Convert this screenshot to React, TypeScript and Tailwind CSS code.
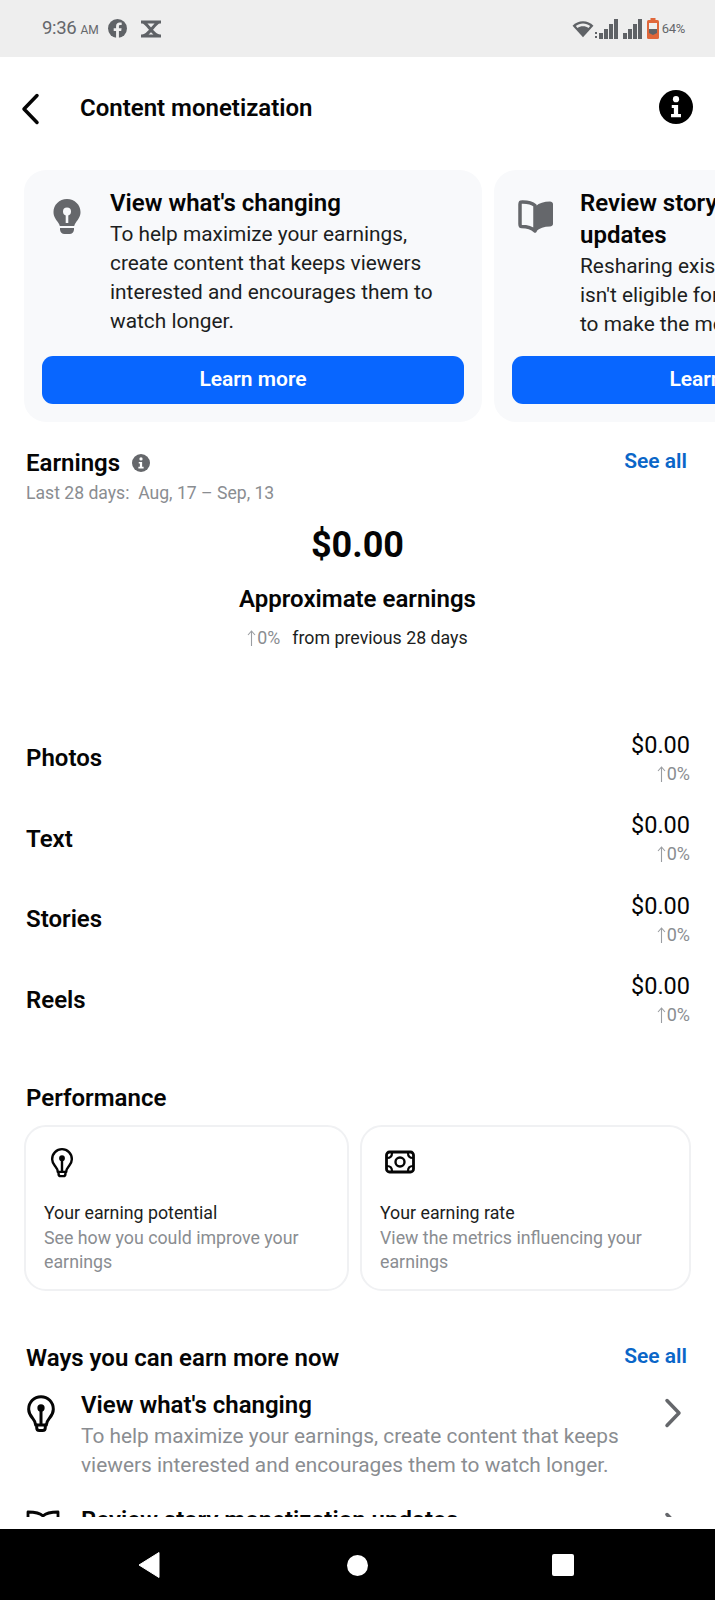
import React from 'react';

const font = { fontFamily: 'Roboto, sans-serif' };

function BulbFilled() {
  return (
    <svg width="30" height="38" viewBox="0 0 30 38" className="shrink-0">
      <path d="M15 1C7.2 1 1.5 7 1.5 14c0 4.600 2.400 7.600 4.600 10.400.9 1.200 1.400 2.200 1.700 3.600h14.400c.3-1.400.8-2.400 1.700-3.600 2.200-2.800 4.600-5.800 4.600-10.400C28.500 7 22.800 1 15 1z" fill="#65676b" />
      <circle cx="15" cy="13.500" r="4" fill="#f8f9fb" />
      <rect x="13.700" y="15" width="2.600" height="10" fill="#f8f9fb" />
      <path d="M8 30h14v1.500c0 2.500-2 4.500-4.500 4.500h-5C10 36 8 34 8 31.500z" fill="#65676b" />
    </svg>
  );
}

function BookFilled() {
  return (
    <svg width="36" height="36" viewBox="0 0 36 36" className="shrink-0 -ml-[4px]">
      <path d="M17 7.500C14 4.800 9.500 3.800 3.500 4 2.500 4 2 5 2 6.500V26c0 1.500.5 2.500 1.500 2.500 5.500 0 10 1 13.500 4.500z" fill="none" stroke="#65676b" strokeWidth="3.500" strokeLinejoin="round" />
      <path d="M18 8c3-3 8-4.500 14-4.500 1.500 0 3 1 3 2.500v20c0 1.500-1.500 2.500-3 2.500-6 0-10.500 1.500-14 5z" fill="#65676b" />
    </svg>
  );
}

function BulbOutline({ size = 28 }: { size?: number }) {
  return (
    <svg width={size} height={size * 1.3} viewBox="0 0 28 36.400" className="shrink-0" fill="none" stroke="#050505" strokeWidth="2.800" strokeLinecap="round" strokeLinejoin="round">
      <path d="M9 29c0-3-1.200-4.400-3-6.600C4 20 2.500 17.600 2.500 14.200 2.500 7.600 7.600 2.500 14 2.500s11.500 5.100 11.500 11.700c0 3.400-1.500 5.800-3.500 8.200-1.800 2.200-3 3.600-3 6.600z" />
      <path d="M10 29v2.500c0 1.500 1 2.500 2.500 2.500h3c1.500 0 2.500-1 2.500-2.500V29" />
      <path d="M14 14v14" />
      <circle cx="14" cy="13" r="2" fill="#050505" />
    </svg>
  );
}

function MoneyIcon() {
  return (
    <svg width="30" height="24" viewBox="0 0 30 24" fill="none" stroke="#050505" className="shrink-0 mt-[3px] -ml-[1px]">
      <rect x="1.500" y="2" width="27" height="20" rx="3" strokeWidth="2.800" />
      <circle cx="15" cy="12" r="4.500" strokeWidth="2.400" />
      <path d="M2 8c3 0 5-2 5-5M28 8c-3 0-5-2-5-5M2 16c3 0 5 2 5 5M28 16c-3 0-5 2-5 5" strokeWidth="2.200" />
    </svg>
  );
}

function InfoDot({ size, color }: { size: number; color: string }) {
  return (
    <svg width={size} height={size} viewBox="0 0 24 24" className="shrink-0">
      <circle cx="12" cy="12" r="12" fill={color} />
      <circle cx="12" cy="6.500" r="2.200" fill="#fff" />
      <path d="M9 10.500h4.500V17H15.500v2.200h-7V17h2v-4.300H9z" fill="#fff" />
    </svg>
  );
}

function UpArrow() {
  return (
    <svg width="9" height="16" viewBox="0 0 9 16" fill="none" stroke="#9a9da1" strokeWidth="1.100" className="shrink-0">
      <path d="M4.500 16V1M1 5l3.500-4L8 5" />
    </svg>
  );
}

function StatusBar() {
  const bars = [6, 10, 15, 20];
  return (
    <div className="h-[57px] shrink-0 bg-[#eeeeee] flex items-center justify-between pl-[42px] pr-[30px] text-[#65676b]">
      <div className="flex items-center">
        <span className="text-[18.500px] tracking-[-0.3px]">9:36</span>
        <span className="text-[12px] ml-[4px] mt-[3px]">AM</span>
        <svg width="19" height="19" viewBox="0 0 20 20" className="ml-[9px]">
          <circle cx="10" cy="10" r="10" fill="#5f6266" />
          <path d="M8.500 20v-7.500H6V9.700h2.500V7.600c0-2.500 1.500-3.800 3.700-3.800 1 0 1.900.1 2.200.1v2.500h-1.500c-1.200 0-1.400.6-1.400 1.400v1.900h2.800l-.4 2.800h-2.400V20z" fill="#eeeeee" />
        </svg>
        <svg width="22" height="18" viewBox="0 0 22 18" className="ml-[13px]" fill="none" stroke="#5f6266" strokeWidth="3" strokeLinejoin="round">
          <path d="M1 2h20M1 16h20M2 2c6 0 10 14 18 14M20 2C14 2 10 16 2 16" />
        </svg>
      </div>
      <div className="flex items-center">
        <svg width="22" height="18" viewBox="0 0 20 16">
          <path d="M10 15.500L.5 5C3 2.500 6.300 1 10 1s7 1.500 9.500 4z" fill="#5f6266" />
          <path d="M3.500 5.200C5.200 3.800 7.500 3 10 3s4.800.8 6.500 2.200L15 7c-1.300-1-3-1.500-5-1.500S6.300 6 5 7z" fill="#eeeeee" />
        </svg>
        <div className="flex items-end gap-[1px] ml-[1px] h-[20px]">
          <div className="flex flex-col gap-[2px] mr-[1px] mb-[1px]">
            <div className="w-[2px] h-[2px] bg-[#5f6266]" />
            <div className="w-[2px] h-[2px] bg-[#5f6266]" />
          </div>
          {bars.map((h) => (
            <div key={h} className="w-[4px] bg-[#5f6266]" style={{ height: h }} />
          ))}
          <div className="w-[3px]" />
          {bars.map((h) => (
            <div key={h} className="w-[4px] bg-[#5f6266]" style={{ height: h }} />
          ))}
        </div>
        <svg width="12" height="21" viewBox="0 0 12 21" className="ml-[5px]">
          <rect x="3.500" y="0" width="5" height="2" fill="#e0673a" />
          <rect x="0" y="2" width="12" height="19" rx="1.500" fill="#e0673a" />
          <rect x="2" y="5" width="8" height="6" fill="#eeeeee" />
          <path d="M2 11h8v4l-4 2-4-2z" fill="#5f6266" />
        </svg>
        <span className="text-[13px] ml-[3px] tracking-[-0.3px]">64%</span>
      </div>
    </div>
  );
}

function PromoCard({ icon, title, body }: { icon: React.ReactNode; title: React.ReactNode; body: React.ReactNode }) {
  return (
    <div className="w-[458px] shrink-0 h-[252px] bg-[#f8f9fb] rounded-[22px] px-[18px] pt-[17px] flex flex-col">
      <div className="flex h-[166px] overflow-hidden">
        <div className="w-[50px] shrink-0 pl-[10px] pt-[11px]">{icon}</div>
        <div className="pl-[18px] min-w-[346px]">
          <div className="text-[24px] leading-[32px] font-semibold text-[#050505] whitespace-nowrap">{title}</div>
          <div className="text-[20.850px] leading-[29px] mt-[1px] text-[#1c1e21] whitespace-pre-line">{body}</div>
        </div>
      </div>
      <div className="h-[48px] w-[422px] mt-[3px] shrink-0 bg-[#0866ff] rounded-[11px] text-white text-[21px] font-semibold flex items-center justify-center">
        Learn more
      </div>
    </div>
  );
}

function EarningRow({ label }: { label: string }) {
  return (
    <div className="flex items-center justify-between h-[80.500px] -mr-[1px]">
      <span className="text-[24px] font-semibold text-[#050505]">{label}</span>
      <div className="flex flex-col items-end">
        <span className="text-[23.500px] leading-[30px] text-[#050505]">$0.00</span>
        <span className="text-[18px] leading-[26px] mt-[1px] text-[#8a8d91] flex items-center gap-[1px]"><UpArrow />0%</span>
      </div>
    </div>
  );
}

function PerfCard({ icon, title, desc, className }: { icon: React.ReactNode; title: string; desc: string; className: string }) {
  return (
    <div className={`${className} h-[166px] rounded-[22px] border-2 border-[#f0f1f3] pl-[18px] pr-[12px] pt-[20px]`}>
      <div className="h-[49px] pl-[6px] flex items-start">{icon}</div>
      <div className="text-[17.800px] leading-[26px] mt-[4px] text-[#1c1e21]">{title}</div>
      <div className="text-[17.800px] leading-[24px] text-[#8a8d91]">{desc}</div>
    </div>
  );
}

export default function App() {
  return (
    <div className="w-[715px] h-[1600px] bg-white flex flex-col overflow-hidden" style={font}>
      <StatusBar />

      <div className="h-[100px] shrink-0 flex items-center pl-[21px] pr-[22px] pt-[1px]">
        <svg width="20" height="32" viewBox="0 0 20 32" fill="none" stroke="#050505" strokeWidth="3.500" strokeLinecap="round" strokeLinejoin="round" className="mt-[2px]">
          <path d="M16 2.500L3 16l13 13.500" />
        </svg>
        <span className="ml-[39px] text-[24px] font-semibold text-[#050505]">Content monetization</span>
        <div className="ml-auto -mt-[1px]"><InfoDot size={34} color="#000" /></div>
      </div>

      <div className="flex-1 mb-[12px] overflow-hidden">
        <div className="flex gap-[12px] pl-[24px] pt-[13px] w-[1200px]">
          <PromoCard
            icon={<BulbFilled />}
            title="View what's changing"
            body={'To help maximize your earnings,\ncreate content that keeps viewers\ninterested and encourages them to\nwatch longer.'}
          />
          <PromoCard
            icon={<BookFilled />}
            title={<>Review story monetization<br />updates</>}
            body={"Resharing existing content\nisn't eligible for monetization\nto make the most of it"}
          />
        </div>

        <div className="px-[26px] mt-[26px]">
          <div className="flex justify-between items-start">
            <div className="flex items-center gap-[12px]">
              <span className="text-[24px] leading-[30px] font-semibold text-[#050505]">Earnings</span>
              <InfoDot size={18} color="#65676b" />
            </div>
            <span className="text-[21px] leading-[26px] font-semibold text-[#0a66c8] mr-[2px]">See all</span>
          </div>
          <div className="text-[17.600px] leading-[26px] mt-[2px] text-[#8a8d91]">Last 28 days:&nbsp; Aug, 17 – Sep, 13</div>

          <div className="flex flex-col items-center mt-[13px]">
            <span className="text-[36px] leading-[52px] font-bold text-[#050505]">$0.00</span>
            <span className="text-[24px] leading-[34px] mt-[11px] font-semibold text-[#050505]">Approximate earnings</span>
            <div className="mt-[9px] text-[17.800px] leading-[26px] flex items-center gap-[12px]">
              <span className="text-[#8a8d91] flex items-center gap-[1px]"><UpArrow />0%</span>
              <span className="text-[#1c1e21]">from previous 28 days</span>
            </div>
          </div>

          <div className="mt-[67px]">
            <EarningRow label="Photos" />
            <EarningRow label="Text" />
            <EarningRow label="Stories" />
            <EarningRow label="Reels" />
          </div>
        </div>

        <div className="text-[24px] leading-[30px] font-semibold text-[#050505] px-[26px] mt-[43px]">Performance</div>
        <div className="flex gap-[11px] pl-[24px] pr-[24px] mt-[12px]">
          <PerfCard className="w-[325px]" icon={<BulbOutline size={24} />} title="Your earning potential" desc="See how you could improve your earnings" />
          <PerfCard className="w-[331px]" icon={<MoneyIcon />} title="Your earning rate" desc="View the metrics influencing your earnings" />
        </div>

        <div className="flex justify-between items-start px-[26px] mt-[52px]">
          <span className="text-[24px] leading-[30px] font-semibold text-[#050505]">Ways you can earn more now</span>
          <span className="text-[21px] leading-[26px] font-semibold text-[#0a66c8] mr-[2px]">See all</span>
        </div>

        <div className="flex pl-[26px] pr-[32px] mt-[16px]">
          <div className="w-[55px] shrink-0 pt-[5px]"><BulbOutline size={30} /></div>
          <div className="flex-1">
            <div className="text-[24px] leading-[32px] font-semibold text-[#050505]">View what's changing</div>
            <div className="text-[20.850px] leading-[29px] mt-[1px] text-[#8a8d91] whitespace-nowrap">To help maximize your earnings, create content that keeps<br />viewers interested and encourages them to watch longer.</div>
          </div>
          <svg width="20" height="30" viewBox="0 0 20 30" fill="none" stroke="#65676b" strokeWidth="3.500" strokeLinecap="round" strokeLinejoin="round" className="mt-[9px] shrink-0">
            <path d="M4 2.500L16 15 4 27.500" />
          </svg>
        </div>

        <div className="flex pl-[26px] pr-[32px] mt-[24px]">
          <div className="w-[55px] shrink-0 pt-[6px]">
            <svg width="34" height="30" viewBox="0 0 34 30" fill="none" stroke="#050505" strokeWidth="2.800" strokeLinejoin="round">
              <path d="M17 6C14 3 9 2 2 2v22c7 0 12 1 15 4 3-3 8-4 15-4V2c-7 0-12 1-15 4z" />
            </svg>
          </div>
          <div className="flex-1 text-[24px] leading-[32px] font-semibold text-[#050505]">Review story monetization updates</div>
          <svg width="20" height="30" viewBox="0 0 20 30" fill="none" stroke="#65676b" strokeWidth="3.500" strokeLinecap="round" strokeLinejoin="round" className="mt-[8px] shrink-0">
            <path d="M4 2.500L16 15 4 27.500" />
          </svg>
        </div>
      </div>

      <div className="h-[71px] shrink-0 bg-black flex items-center pt-[1px]">
        <div className="w-[1px] ml-[137px]" />
        <svg width="22" height="26" viewBox="0 0 22 26"><path d="M21 0.500V25.500L1 13z" fill="#fff" stroke="#fff" strokeLinejoin="round" /></svg>
        <div className="w-[21px] h-[21px] rounded-full bg-white ml-[187px]" />
        <div className="w-[22px] h-[22px] rounded-[2px] bg-white ml-[184px]" />
      </div>
    </div>
  );
}
